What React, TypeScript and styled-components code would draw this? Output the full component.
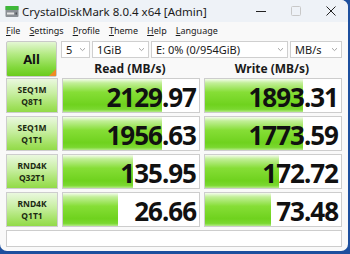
import React from 'react';
import styled, { createGlobalStyle } from 'styled-components';

const GlobalStyle = createGlobalStyle`
    html, body {
        margin: 0;
        padding: 0;
        background: #1d4f9e;
        width: 350px;
        height: 254px;
        overflow: hidden;
    }
    * { box-sizing: border-box; }
`
const Window = styled.div`
    width: 348px;
    height: 251px;
    background: #f9f9f9;
    border-radius: 0 7px 7px 7px;
    overflow: hidden;
    display: flex;
    flex-direction: column;
    font-family: "Noto Sans", "Open Sans", sans-serif;
    color: #1a1a1a;
`
const TitleBar = styled.div`
    height: 22px;
    display: flex;
    align-items: center;
    background: #eef2f7;
    padding-left: 5px;
`
const Title = styled.span`
    font-size: 11.5px;
    margin-left: 3px;
    flex: 1;
    white-space: nowrap;
`
const Controls = styled.div`
    display: flex;
    height: 100%;
`
const ControlBtn = styled.div`
    width: 35px;
    height: 100%;
    display: flex;
    align-items: center;
    justify-content: center;
`
const MenuBar = styled.div`
    height: 16px;
    display: flex;
    align-items: center;
    gap: 9px;
    padding-left: 6px;
    background: #f9f9f9;
    font-size: 9px;
`
const MenuItem = styled.span`
    u { text-decoration-thickness: 1px; text-underline-offset: 1px; }
`
const Content = styled.div`
    padding: 3px 6px 0 6px;
    display: flex;
    flex-direction: column;
    gap: 1px;
`
const TopArea = styled.div`
    display: flex;
    gap: 4px;
`
const AllButton = styled.div`
    position: relative;
    width: 52px;
    height: 36px;
    border: 1px solid #c9c9c9;
    border-radius: 2px;
    background: linear-gradient(to bottom, #e4f7d4 0%, #b4ea84 35%, #82d83c 75%, #6acb1c 100%);
    display: flex;
    align-items: center;
    justify-content: center;
    font-weight: 700;
    font-size: 13px;
    color: #111;
    overflow: hidden;
    &::after {
        content: '';
        position: absolute;
        right: 0;
        bottom: 0;
        border-style: solid;
        border-width: 0 0 7px 7px;
        border-color: transparent transparent #f08a24 transparent;
    }
`
const TopRight = styled.div`
    display: flex;
    flex-direction: column;
    width: 281px;
`
const SelectRow = styled.div`
    display: flex;
    gap: 2px;
    height: 17px;
`
const Select = styled.div<{ $w: number }>`
    width: ${p => p.$w}px;
    height: 17px;
    border: 1px solid #cfcfcf;
    background: #fff;
    display: flex;
    align-items: center;
    padding: 0 3px 0 4px;
    font-size: 11px;
    span { flex: 1; white-space: nowrap; line-height: 15px; }
`
const Chevron = () => (
    <svg width="7" height="5" viewBox="0 0 7 5">
        <path d="M1 1.2 L3.5 3.6 L6 1.2" fill="none" stroke="#9a9a9a" strokeWidth="0.9" />
    </svg>
)
const HeaderRow = styled.div`
    display: flex;
    gap: 4px;
    height: 19px;
    align-items: flex-end;
`
const Header = styled.div`
    width: 138px;
    text-align: center;
    font-weight: 700;
    font-size: 12px;
    line-height: 16px;
`
const Grid = styled.div`
    display: grid;
    grid-template-columns: 52px 138px 138px;
    grid-auto-rows: 35px;
    column-gap: 4px;
    row-gap: 3px;
`
const Label = styled.div`
    border: 1px solid #cdcdcd;
    background: linear-gradient(to bottom, #eaf8df 0%, #c6ee9f 45%, #9fe05c 85%, #92da48 100%);
    display: flex;
    flex-direction: column;
    align-items: center;
    justify-content: center;
    font-weight: 700;
    font-size: 8.5px;
    line-height: 12px;
    color: #1c2a12;
`
const ValueBox = styled.div`
    position: relative;
    border: 1px solid #cdcdcd;
    background: #fff;
    display: flex;
    align-items: center;
    justify-content: flex-end;
    padding: 2px 3px 0 0;
`
const Bar = styled.div`
    position: absolute;
    left: 0;
    top: 0;
    bottom: 0;
    background: linear-gradient(to bottom, #f4fcec 0%, #c2ef98 12%, #86de36 40%, #6fd21e 78%, #7bd830 92%, #b4ea88 100%);
`
const Value = styled.span`
    position: relative;
    font-weight: 700;
    font-size: 26px;
    letter-spacing: -1px;
    color: #111;
    line-height: 1;
`
const Comment = styled.div`
    margin-top: 2px;
    height: 17px;
    border: 1px solid #cdcdcd;
    background: #fff;
`

const DriveIcon = () => (
    <svg width="14" height="13" viewBox="0 0 14 13">
        <rect x="0.5" y="1" width="13" height="11" rx="1" fill="#8a8f95" />
        <rect x="0.5" y="1" width="13" height="4" fill="#3fb83a" />
        <rect x="2" y="7.5" width="7" height="2" fill="#e6e6e6" />
        <rect x="10.5" y="7.5" width="1.5" height="2" fill="#4a4f55" />
    </svg>
)

const rows = [
    { a: 'SEQ1M', b: 'Q8T1', read: '2129.97', rw: 99, write: '1893.31', ww: 98 },
    { a: 'SEQ1M', b: 'Q1T1', read: '1956.63', rw: 99, write: '1773.59', ww: 98 },
    { a: 'RND4K', b: 'Q32T1', read: '135.95', rw: 70, write: '172.72', ww: 74 },
    { a: 'RND4K', b: 'Q1T1', read: '26.66', rw: 55, write: '73.48', ww: 66 },
];

const menus = ['File', 'Settings', 'Profile', 'Theme', 'Help', 'Language'];

const App = () => {
    return (
        <>
        <GlobalStyle />
        <Window>
            <TitleBar>
                <DriveIcon />
                <Title>CrystalDiskMark 8.0.4 x64 [Admin]</Title>
                <Controls>
                    <ControlBtn>
                        <svg width="10" height="10" viewBox="0 0 10 10"><path d="M0 5.5 H10" stroke="#222" strokeWidth="1" /></svg>
                    </ControlBtn>
                    <ControlBtn>
                        <svg width="10" height="10" viewBox="0 0 10 10"><rect x="0.5" y="0.5" width="9" height="9" rx="1" fill="none" stroke="#c8c8c8" /></svg>
                    </ControlBtn>
                    <ControlBtn>
                        <svg width="10" height="10" viewBox="0 0 10 10"><path d="M0.5 0.5 L9.5 9.5 M9.5 0.5 L0.5 9.5" stroke="#222" strokeWidth="1" /></svg>
                    </ControlBtn>
                </Controls>
            </TitleBar>
            <MenuBar>
                {menus.map(m => (
                    <MenuItem key={m}><u>{m[0]}</u>{m.slice(1)}</MenuItem>
                ))}
            </MenuBar>
            <Content>
                <TopArea>
                    <AllButton>All</AllButton>
                    <TopRight>
                        <SelectRow>
                            <Select $w={29}><span>5</span><Chevron /></Select>
                            <Select $w={57}><span>1GiB</span><Chevron /></Select>
                            <Select $w={137}><span>E: 0% (0/954GiB)</span><Chevron /></Select>
                            <Select $w={52}><span>MB/s</span><Chevron /></Select>
                        </SelectRow>
                        <HeaderRow>
                            <Header>Read (MB/s)</Header>
                            <Header>Write (MB/s)</Header>
                        </HeaderRow>
                    </TopRight>
                </TopArea>
                <Grid>
                    {rows.map((r, i) => (
                        <React.Fragment key={i}>
                            <Label><span>{r.a}</span><span>{r.b}</span></Label>
                            <ValueBox>
                                <Bar style={{ width: r.rw }} />
                                <Value>{r.read}</Value>
                            </ValueBox>
                            <ValueBox>
                                <Bar style={{ width: r.ww }} />
                                <Value>{r.write}</Value>
                            </ValueBox>
                        </React.Fragment>
                    ))}
                </Grid>
                <Comment />
            </Content>
        </Window>
        </>
    );
};

export default App;
